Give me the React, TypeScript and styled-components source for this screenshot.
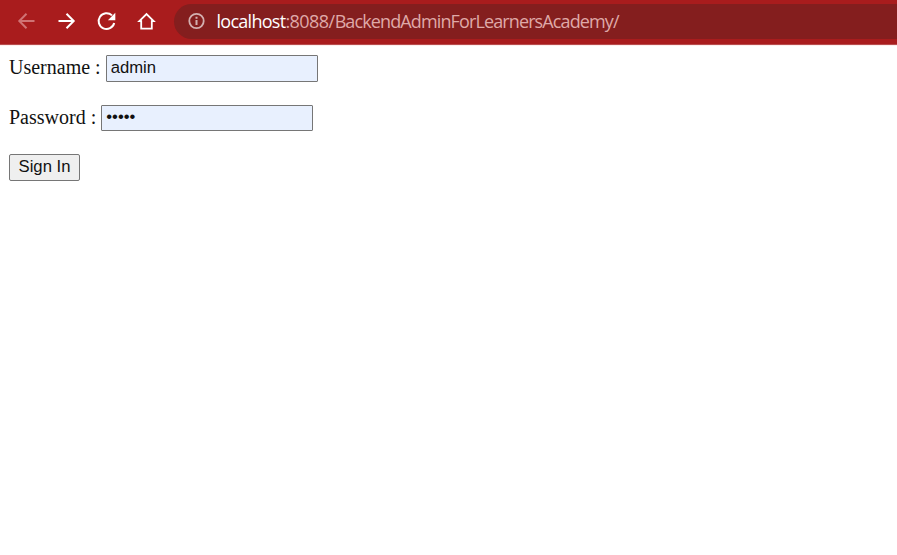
import React from 'react';
import styled, { createGlobalStyle } from 'styled-components';

const Global = createGlobalStyle`
  html, body { margin: 0; background: #fff; overflow: hidden; }
`;
const Page = styled.div`
  height: 555px;
`;
const Toolbar = styled.header`
  display: flex;
  height: 45px;
  box-sizing: border-box;
  padding: 4px 0 5px 14px;
  align-items: center;
  background: #a91c1d;
  border-bottom: 1px solid #b84c4d;
  box-shadow: 0 1px #fdeeed;
`;
const NavButton = styled.span<{ $dim?: boolean }>`
  width: 24px;
  height: 24px;
  margin: 0 16px 1px 0;
  color: ${p => (p.$dim ? '#d07374' : '#fff')};
`;
const Glyph = styled.svg`
  display: block;
  fill: none;
  stroke: currentColor;
  stroke-width: 2;
`;
const Address = styled.div`
  display: flex;
  align-items: center;
  flex: 1;
  box-sizing: border-box;
  height: 35px;
  padding: 0 0 1px 10px;
  border-radius: 18px 0 0 18px;
  background: #841e1e;
  color: #dfa9a8;
  font: 18px "Open Sans", sans-serif;
  letter-spacing: -0.88px;
  white-space: nowrap;
`;
const InfoBadge = styled.span`
  color: #d3b0b0;
`;
const Host = styled.span`
  color: #fff;
  letter-spacing: -0.72px;
`;
const Port = styled.span`
  letter-spacing: -0.55px;
`;
const Url = styled.span`
  margin-left: 8.5px;
`;
const Form = styled.form`
  display: flex;
  flex-direction: column;
  align-items: flex-start;
  gap: 23px;
  padding: 10px 9px;
  font: 20px/25px "Liberation Serif", serif;
  color: #111;
`;
const Row = styled.label`
  display: flex;
  align-items: flex-start;
  gap: 5px;
`;
const Field = styled.input<{ $height: number }>`
  box-sizing: border-box;
  width: 212px;
  height: ${p => p.$height}px;
  margin: 0;
  padding: 0 3px 2px 4px;
  border: 1px solid #767676;
  border-radius: 1px;
  outline: none;
  background: #e8f0fe;
  color: #111;
  font: 16.67px "Liberation Sans", sans-serif;
`;
const Submit = styled.button`
  box-sizing: border-box;
  height: 27px;
  width: 71px;
  margin: 0;
  padding: 0 0 2px;
  border: 1px solid #767676;
  border-radius: 2px;
  background: #efefef;
  color: #111;
  font: 16.67px "Liberation Sans", sans-serif;
`;

const BackIcon = () => (
  <Glyph width="24" height="24" viewBox="0 0 24 24">
    <path d="M20.5 12H5.5M12.5 4.8L5.3 12l7.2 7.2" />
  </Glyph>
);
const ForwardIcon = () => (
  <Glyph width="24" height="24" viewBox="0 0 24 24">
    <path d="M4.5 12H19.5M12.5 4.8L19.7 12l-7.2 7.2" />
  </Glyph>
);
const ReloadIcon = () => (
  <Glyph width="24" height="24" viewBox="0 0 24 24">
    <path d="M20.2 14A7.9 7.9 0 1 1 18 6.4" />
    <path d="M21.3 3.8v7.4h-7.4z" fill="currentColor" stroke="none" />
  </Glyph>
);
const HomeIcon = () => (
  <Glyph width="24" height="24" viewBox="0 0 24 24">
    <path d="M5.3 12.2L12.5 5l7.2 7.2h-1.9v7.4H7.2v-7.4z" strokeWidth="1.8" />
  </Glyph>
);
const InfoIcon = () => (
  <Glyph width="24" height="24" viewBox="0 0 24 24">
    <circle cx="12.5" cy="12" r="7.2" strokeWidth="1.8" />
    <path d="M12.5 11v5M12.5 7.8v2" />
  </Glyph>
);

export default function App() {
  return (
    <Page>
      <Global />
      <Toolbar>
        <NavButton $dim><BackIcon /></NavButton>
        <NavButton><ForwardIcon /></NavButton>
        <NavButton><ReloadIcon /></NavButton>
        <NavButton><HomeIcon /></NavButton>
        <Address>
          <InfoBadge><InfoIcon /></InfoBadge>
          <Url><Host>localhost</Host><Port>:8088/</Port>BackendAdminForLearnersAcademy/</Url>
        </Address>
      </Toolbar>
      <Form onSubmit={e => e.preventDefault()}>
        <Row>Username : <Field $height={27} defaultValue="admin" /></Row>
        <Row>Password : <Field $height={26} type="password" defaultValue="admin" /></Row>
        <Submit>Sign In</Submit>
      </Form>
    </Page>
  );
}
